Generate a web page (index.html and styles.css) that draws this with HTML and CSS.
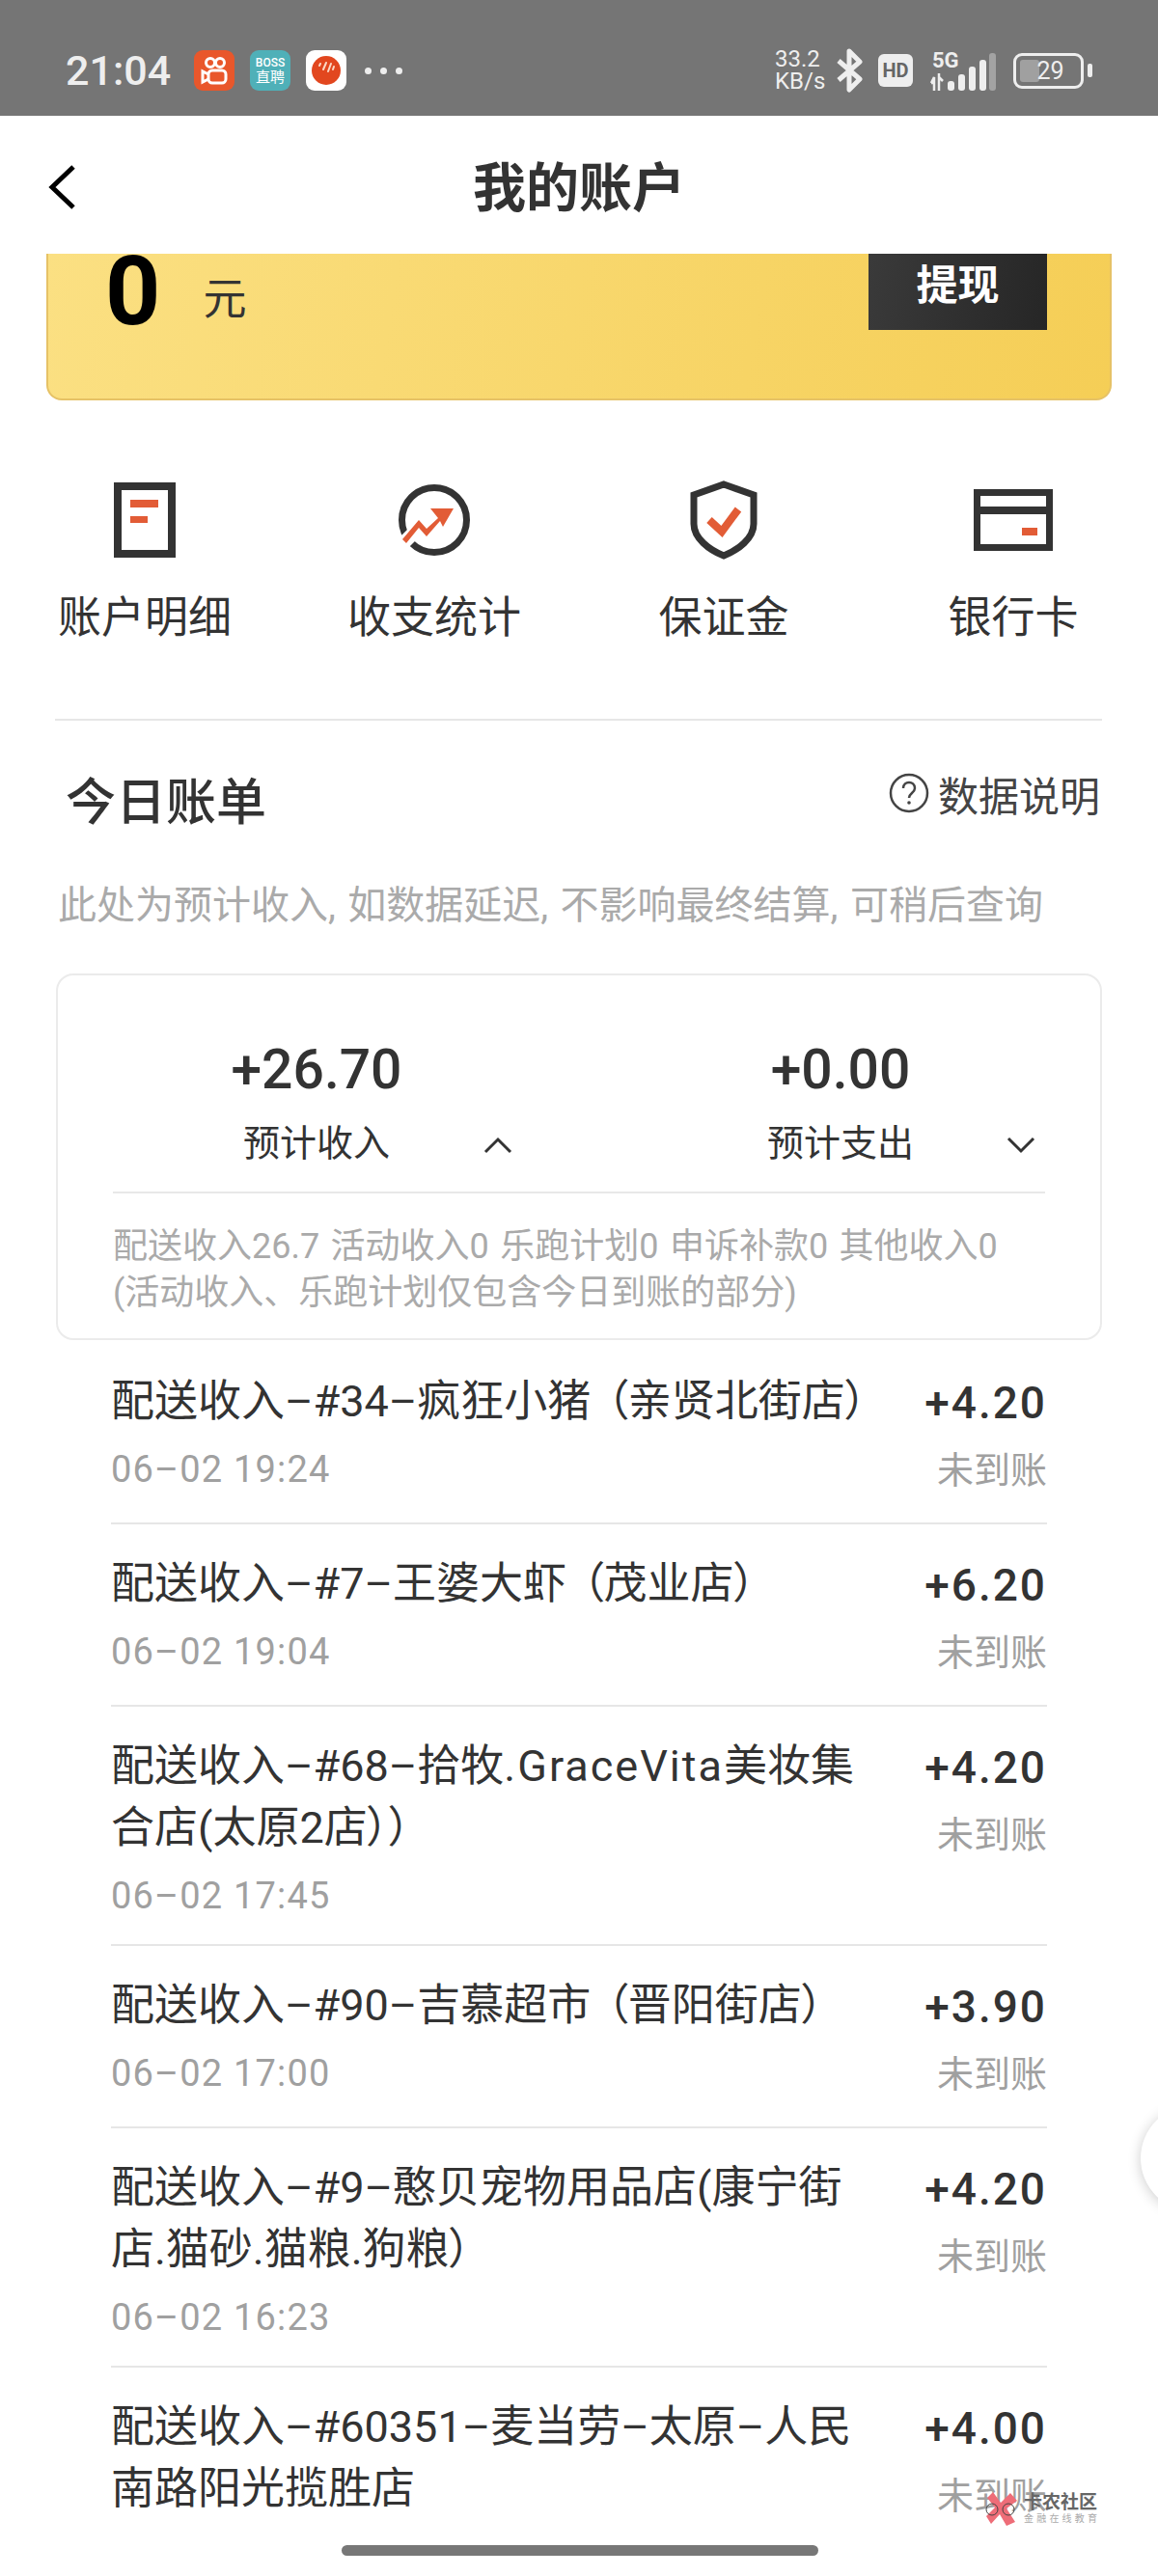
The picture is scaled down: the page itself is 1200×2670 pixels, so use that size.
FILE: index.html
```html
<!DOCTYPE html>
<html lang="zh-CN">
<head>
    <meta charset="UTF-8">
    <meta name="viewport" content="width=device-width, initial-scale=1.0">
    <title>我的账户</title>
    <link rel="stylesheet" href="styles.css">
</head>
<body>
<div class="screen">
    <!-- Status bar -->
    <div class="status-bar">
        <div class="status-left">
            <span class="clock">21:04</span>
            <svg class="app-icon" viewBox="0 0 42 42">
                <rect width="42" height="42" rx="9" fill="#e9572b"/>
                <circle cx="17" cy="13" r="4.5" fill="none" stroke="#fff" stroke-width="3"/>
                <circle cx="27" cy="13" r="4.5" fill="none" stroke="#fff" stroke-width="3"/>
                <rect x="15" y="21" width="18" height="13" rx="4" fill="none" stroke="#fff" stroke-width="3"/>
                <path d="M15 25 L9 22 V33 L15 30" fill="none" stroke="#fff" stroke-width="3"/>
            </svg>
            <div class="boss-icon"><span class="boss-top">BOSS</span><span class="boss-bottom">直聘</span></div>
            <svg class="app-icon" viewBox="0 0 42 42">
                <rect width="42" height="42" rx="9" fill="#fff"/>
                <circle cx="21" cy="21" r="15" fill="#e2471f"/>
                <path d="M14 16 L15 14 M18 20 L21 13 M23 22 L26 14 M28 20 L29 17" stroke="#fbd9c6" stroke-width="2" stroke-linecap="round"/>
            </svg>
            <span class="more-dots"><i></i><i></i><i></i></span>
        </div>
        <div class="status-right">
            <div class="net-speed"><span>33.2</span><span>KB/s</span></div>
            <svg class="bluetooth" viewBox="0 0 30 46">
                <path d="M4 13 L26 32 L15 43 V3 L26 14 L4 33" fill="none" stroke="#eee" stroke-width="5" stroke-linejoin="round"/>
            </svg>
            <span class="hd-badge">HD</span>
            <svg class="signal" viewBox="0 0 72 46">
                <text x="5" y="20" class="signal-text">5G</text>
                <path d="M4 36 L7 30 V44 M4 36 H7 M12 26 V44 M12 30 L16 34" fill="none" stroke="#eee" stroke-width="2.5"/>
                <rect x="21" y="34" width="7" height="10" rx="3" fill="#eee"/>
                <rect x="32" y="27" width="7" height="17" rx="3" fill="#eee"/>
                <rect x="43" y="19" width="7" height="25" rx="3" fill="#eee"/>
                <rect x="54" y="12" width="7" height="32" rx="3" fill="#eee"/>
                <rect x="64" y="5" width="7" height="39" rx="3" fill="#a3a3a3"/>
            </svg>
            <div class="battery">
                <div class="battery-body"><span class="battery-fill"></span><span class="battery-num">29</span></div>
                <span class="battery-nub"></span>
            </div>
        </div>
    </div>

    <!-- Nav -->
    <div class="nav-bar">
        <svg class="back-icon" viewBox="0 0 30 48">
            <path d="M27 3 L5 24 L27 45" fill="none" stroke="#000" stroke-width="5"/>
        </svg>
        <h1 class="nav-title">我的账户</h1>
    </div>

    <div class="content">
        <!-- Balance card, scrolled under the nav -->
        <div class="balance-clip">
            <div class="balance-card">
                <div class="balance-amount"><span class="balance-num">0</span><span class="balance-unit">元</span></div>
                <div class="withdraw-btn">提现</div>
            </div>
        </div>

        <!-- Quick links -->
        <div class="quick-row">
            <div class="quick-item">
                <svg class="quick-icon" width="64" height="78" viewBox="0 0 64 78">
                    <rect x="4" y="4" width="56" height="70" fill="none" stroke="#333" stroke-width="8"/>
                    <rect x="17" y="18" width="29" height="8" fill="#e25c36"/>
                    <rect x="17" y="35" width="18" height="7" fill="#e25c36"/>
                </svg>
                <span>账户明细</span>
            </div>
            <div class="quick-item">
                <svg class="quick-icon" width="76" height="76" viewBox="0 0 76 76">
                    <circle cx="38" cy="38" r="33.5" fill="none" stroke="#333" stroke-width="7"/>
                    <path d="M-2 70 L24 44" stroke="#fff" stroke-width="14"/>
                    <path d="M5 58 L22 38 L30 47 L42 36 L34 26 L58 26 L47 45 L44 39 L30 55 L22 46 L9 62 Z" fill="#e25c36"/>
                </svg>
                <span>收支统计</span>
            </div>
            <div class="quick-item">
                <svg class="quick-icon" width="70" height="82" viewBox="0 0 70 82">
                    <path d="M35 4 L66 15 V45 C66 60 50 72 35 78 C20 72 4 60 4 45 V15 Z" fill="none" stroke="#333" stroke-width="7"/>
                    <path d="M20 41 L33 53 L50 30" fill="none" stroke="#e25c36" stroke-width="8"/>
                </svg>
                <span>保证金</span>
            </div>
            <div class="quick-item">
                <svg class="quick-icon" width="82" height="64" viewBox="0 0 82 64">
                    <rect x="3.5" y="3.5" width="75" height="57" fill="none" stroke="#333" stroke-width="7"/>
                    <rect x="3" y="18" width="76" height="8" fill="#333"/>
                    <rect x="50" y="40" width="16" height="8" fill="#e25c36"/>
                </svg>
                <span>银行卡</span>
            </div>
        </div>

        <div class="divider-wide"></div>

        <!-- Today's bill -->
        <div class="bill-head">
            <h2 class="bill-title">今日账单</h2>
            <div class="bill-help">
                <svg width="42" height="42" viewBox="0 0 42 42">
                    <circle cx="21" cy="21" r="19" fill="none" stroke="#444" stroke-width="2.5"/>
                    <path d="M15 16 C15 8 27 8 27 16 C27 21 21 21 21 26" fill="none" stroke="#444" stroke-width="2.5"/>
                    <circle cx="21" cy="31" r="1.8" fill="#444"/>
                </svg>
                <span>数据说明</span>
            </div>
        </div>
        <p class="bill-note">此处为预计收入, 如数据延迟, 不影响最终结算, 可稍后查询</p>

        <div class="summary-card">
            <div class="summary-cols">
                <div class="summary-col">
                    <div class="summary-num">+26.70</div>
                    <div class="summary-label">预计收入</div>
                    <svg class="chevron" width="30" height="18" viewBox="0 0 30 18"><path d="M2 16 L15 3 L28 16" fill="none" stroke="#333" stroke-width="3"/></svg>
                </div>
                <div class="summary-col">
                    <div class="summary-num">+0.00</div>
                    <div class="summary-label">预计支出</div>
                    <svg class="chevron" width="30" height="18" viewBox="0 0 30 18"><path d="M2 2 L15 15 L28 2" fill="none" stroke="#333" stroke-width="3"/></svg>
                </div>
            </div>
            <div class="summary-detail">
                <div>配送收入26.7 活动收入0 乐跑计划0 申诉补款0 其他收入0</div>
                <div>(活动收入、乐跑计划仅包含今日到账的部分)</div>
            </div>
        </div>

        <!-- Records -->
        <div class="record-list">
            <div class="record">
                <div class="record-main">
                    <div class="record-title">配送收入–#34–疯狂小猪<span class="store">（亲贤北街店）</span></div>
                    <div class="record-time">06–02 19:24</div>
                </div>
                <div class="record-side"><div class="record-amount">+4.20</div><div class="record-state">未到账</div></div>
            </div>
            <div class="record">
                <div class="record-main">
                    <div class="record-title">配送收入–#7–王婆大虾<span class="store">（茂业店）</span></div>
                    <div class="record-time">06–02 19:04</div>
                </div>
                <div class="record-side"><div class="record-amount">+6.20</div><div class="record-state">未到账</div></div>
            </div>
            <div class="record record-tall">
                <div class="record-main">
                    <div class="record-title">配送收入–#68–拾牧<span class="latin">.GraceVita</span>美妆集<br>合店(太原2店））</div>
                    <div class="record-time">06–02 17:45</div>
                </div>
                <div class="record-side"><div class="record-amount">+4.20</div><div class="record-state">未到账</div></div>
            </div>
            <div class="record">
                <div class="record-main">
                    <div class="record-title">配送收入–#90–吉慕超市<span class="store">（晋阳街店）</span></div>
                    <div class="record-time">06–02 17:00</div>
                </div>
                <div class="record-side"><div class="record-amount">+3.90</div><div class="record-state">未到账</div></div>
            </div>
            <div class="record record-tall">
                <div class="record-main">
                    <div class="record-title">配送收入–#9–憨贝宠物用品店(康宁街<br>店.猫砂.猫粮.狗粮）</div>
                    <div class="record-time">06–02 16:23</div>
                </div>
                <div class="record-side"><div class="record-amount">+4.20</div><div class="record-state">未到账</div></div>
            </div>
            <div class="record record-tall">
                <div class="record-main">
                    <div class="record-title">配送收入–#60351–麦当劳–太原–人民<br>南路阳光揽胜店</div>
                </div>
                <div class="record-side"><div class="record-amount">+4.00</div><div class="record-state">未到账</div></div>
            </div>
        </div>
    </div>

    <!-- Things floating over the page -->
    <div class="float-ball"></div>
    <span class="home-bar"></span>
    <div class="watermark">
        <svg width="34" height="36" viewBox="0 0 34 36">
            <path d="M8 1 L16 12 L26 2 L33 10 L22 18 L31 32 L22 36 L15 24 L6 34 L1 26 L10 17 L2 7 Z" fill="#ee6d78"/>
            <circle cx="7" cy="19" r="6" fill="none" stroke="#444" stroke-width="1"/>
            <circle cx="24" cy="19" r="6" fill="none" stroke="#444" stroke-width="1"/>
        </svg>
        <div class="watermark-text">
            <span class="watermark-name">卡农社区</span>
            <span class="watermark-sub">金融在线教育</span>
        </div>
    </div>
</div>
</body>
</html>
```
FILE: styles.css
```css
* {
    box-sizing: border-box;
}

html, body {
    margin: 0;
    padding: 0;
}

body {
    font-family: Roboto, "Noto Sans CJK SC", sans-serif;
    background: #fff;
    color: #333;
}

.screen {
    position: relative;
    width: 1200px;
    height: 2670px;
    overflow: hidden;
    background: #fff;
}

/* Status bar */
.status-bar {
    height: 120px;
    background: #757575;
    color: #eee;
    display: flex;
    justify-content: space-between;
    align-items: flex-start;
    padding: 0 68px;
}

.status-left {
    display: flex;
    align-items: center;
    margin-top: 52px;
    height: 42px;
}

.clock {
    font-size: 43px;
    font-weight: 500;
    width: 133px;
}

.app-icon {
    width: 42px;
    height: 42px;
    margin-right: 16px;
}

.boss-icon {
    width: 42px;
    height: 42px;
    margin-right: 16px;
    border-radius: 9px;
    background: #4fb0b8;
    color: #fff;
    display: flex;
    flex-direction: column;
    align-items: center;
    justify-content: center;
    line-height: 1;
}

.boss-top {
    font-size: 12px;
    font-weight: 500;
}

.boss-bottom {
    font-size: 15px;
    margin-top: 2px;
}

.more-dots {
    display: flex;
    gap: 9px;
    margin-left: 3px;
}

.more-dots i {
    width: 7px;
    height: 7px;
    border-radius: 50%;
    background: #eee;
}

.status-right {
    display: flex;
    align-items: center;
    height: 60px;
    margin-top: 43px;
}

.net-speed {
    display: flex;
    flex-direction: column;
    align-items: flex-start;
    font-size: 24px;
    line-height: 23px;
    width: 62px;
}

.bluetooth {
    width: 30px;
    height: 46px;
    margin-right: 15px;
}

.hd-badge {
    width: 36px;
    height: 34px;
    border-radius: 6px;
    background: #eee;
    color: #666;
    font-size: 20px;
    font-weight: 700;
    line-height: 34px;
    text-align: center;
    margin-right: 15px;
}

.signal {
    width: 72px;
    height: 46px;
    margin-right: 17px;
}

.signal-text {
    font-size: 22px;
    font-weight: 700;
    fill: #eee;
}

.battery {
    display: flex;
    align-items: center;
    gap: 4px;
}

.battery-body {
    position: relative;
    width: 73px;
    height: 37px;
    border: 3px solid #eee;
    border-radius: 9px;
    text-align: center;
    font-size: 25px;
    line-height: 31px;
    padding-left: 4px;
}

.battery-fill {
    position: absolute;
    left: 4px;
    top: 4px;
    bottom: 4px;
    width: 20px;
    border-radius: 3px;
    background: #a0a0a0;
}

.battery-num {
    position: relative;
}

.battery-nub {
    width: 5px;
    height: 14px;
    border-radius: 2px;
    background: #eee;
}

/* Nav */
.nav-bar {
    position: relative;
    height: 143px;
    display: flex;
    align-items: center;
    justify-content: center;
    padding-bottom: 4px;
    background: #fff;
}

.back-icon {
    position: absolute;
    left: 49px;
    top: 50px;
    width: 30px;
    height: 48px;
}

.nav-title {
    margin: 0;
    font-size: 55px;
    font-weight: 700;
    color: #333;
}

/* Balance card */
.balance-clip {
    height: 152px;
    overflow: hidden;
    margin: 0 48px;
}

.balance-card {
    height: 252px;
    margin-top: -100px;
    padding: 0 65px 0 59px;
    display: flex;
    justify-content: space-between;
    border: 2px solid #e6c266;
    border-top: 0;
    border-radius: 0 0 16px 16px;
    background: linear-gradient(100deg, #fbe083, #f5ce56);
}

.balance-amount {
    display: flex;
    align-items: flex-start;
    height: 172px;
    padding-top: 58px;
}

.balance-num {
    font-size: 100px;
    font-weight: 700;
    color: #000;
    line-height: 162px;
}

.balance-unit {
    margin: 60px 0 0 44px;
    font-size: 45px;
    line-height: 60px;
    color: #333;
}

.withdraw-btn {
    width: 185px;
    height: 179px;
    padding-top: 106px;
    background: linear-gradient(100deg, #3c3c3c, #262626);
    color: #fff;
    font-size: 43px;
    font-weight: 700;
    line-height: 55px;
    text-align: center;
}

/* Quick links */
.quick-row {
    display: grid;
    grid-template-columns: repeat(4, 300px);
    margin-top: 83px;
}

.quick-item {
    display: flex;
    flex-direction: column;
    align-items: center;
    font-size: 45px;
    line-height: 60px;
    color: #333;
}

.quick-icon {
    height: 82px;
    margin-bottom: 31px;
}

.divider-wide {
    height: 2px;
    margin: 74px 58px 0 57px;
    background: #e6e6e6;
}

/* Bill */
.bill-head {
    display: flex;
    justify-content: space-between;
    padding: 51px 60px 0 68px;
}

.bill-title {
    margin: 0;
    font-size: 52px;
    font-weight: 500;
    line-height: 70px;
    color: #333;
}

.bill-help {
    display: flex;
    align-items: center;
    gap: 9px;
    height: 56px;
    margin-top: -4px;
    font-size: 42px;
    color: #444;
}

.bill-note {
    margin: 45px 0 0 60px;
    font-size: 40px;
    line-height: 52px;
    word-spacing: 2.5px;
    color: #aaa;
}

.summary-card {
    margin: 44px 58px 0;
    height: 380px;
    padding: 0 57px;
    border: 2px solid #ebebeb;
    border-radius: 18px;
}

.summary-cols {
    display: grid;
    grid-template-columns: 510px 458px;
    height: 226px;
    border-bottom: 2px solid #e8e8e8;
}

.summary-col {
    position: relative;
    text-align: center;
    padding-top: 63px;
    padding-left: 30px;
}

.summary-col:first-child {
    padding-left: 0;
    padding-right: 88px;
}

.summary-num {
    font-size: 57px;
    font-weight: 500;
    line-height: 70px;
    color: #333;
}

.summary-label {
    margin-top: 16px;
    font-size: 38px;
    line-height: 50px;
    color: #333;
}

.chevron {
    position: absolute;
    top: 167px;
    right: 12px;
}

.summary-col:first-child .chevron {
    right: 96px;
}

.summary-detail {
    padding-top: 31px;
    font-size: 36px;
    line-height: 48px;
    word-spacing: 2.5px;
    color: #aaa;
    white-space: nowrap;
}

/* Records */
.record-list {
    padding: 2px 115px 0;
}

.record {
    display: flex;
    justify-content: space-between;
    padding: 30px 0 29px;
    border-bottom: 2px solid #e6e6e6;
}

.record-tall {
    padding-bottom: 25px;
}

.record:last-child {
    border-bottom: 0;
}

.record-title {
    font-size: 45px;
    font-feature-settings: "palt";
    line-height: 64px;
    color: #333;
    white-space: nowrap;
}

.store {
    margin-left: 16px;
}

.latin {
    letter-spacing: 2px;
}

.record-time {
    margin-top: 13px;
    font-size: 38px;
    line-height: 50px;
    letter-spacing: 1.2px;
    color: #a0a0a0;
}

.record-side {
    padding-top: 2px;
    text-align: right;
}

.record-amount {
    font-size: 46px;
    font-weight: 500;
    line-height: 62px;
    letter-spacing: 2px;
    color: #333;
}

.record-state {
    margin-top: 14px;
    font-size: 38px;
    line-height: 50px;
    color: #a0a0a0;
}

/* Floating bits */
.float-ball {
    position: absolute;
    left: 1182px;
    top: 2182px;
    width: 110px;
    height: 110px;
    border-radius: 50%;
    background: #fff;
    box-shadow: 0 2px 14px rgba(0, 0, 0, 0.2);
}

.home-bar {
    position: absolute;
    left: 354px;
    top: 2638px;
    width: 494px;
    height: 11px;
    border-radius: 6px;
    background: #777;
}

.watermark {
    position: absolute;
    left: 1021px;
    top: 2582px;
    display: flex;
    gap: 6px;
    align-items: center;
}

.watermark-text {
    display: flex;
    flex-direction: column;
    line-height: 1;
}

.watermark-name {
    font-size: 19px;
    font-weight: 700;
    color: #666;
}

.watermark-sub {
    margin-top: 3px;
    font-size: 10px;
    letter-spacing: 3.2px;
    color: #aaa;
}
```
